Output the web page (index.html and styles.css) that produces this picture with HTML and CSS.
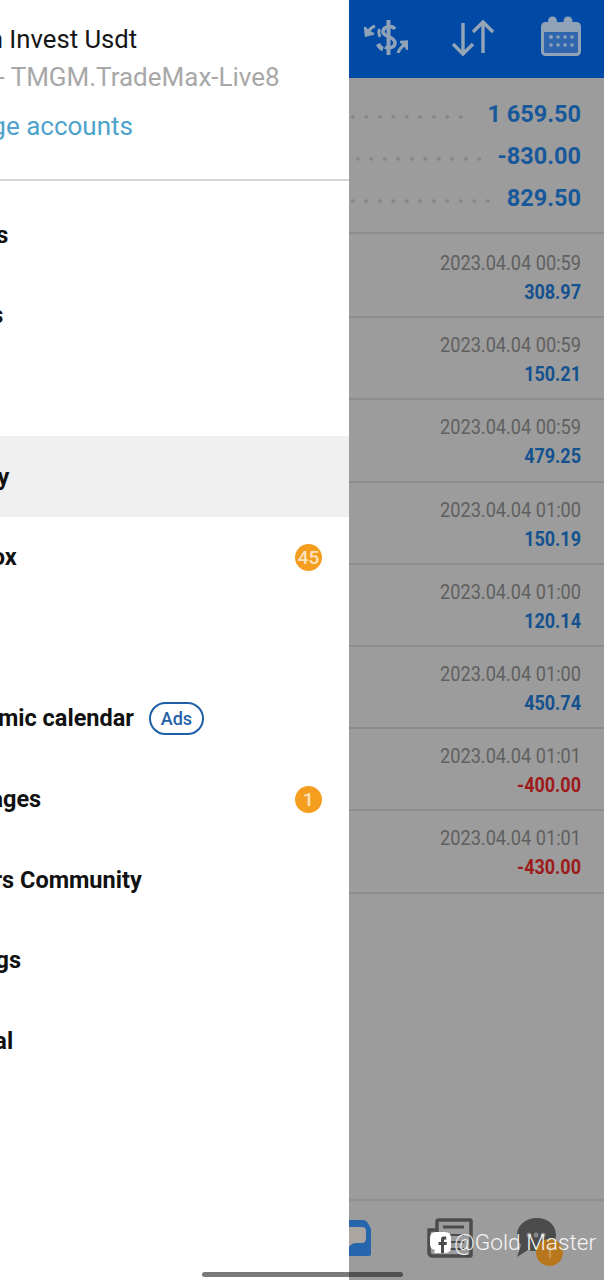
FILE: index.html
```html
<html>
    <head>
        <title>History</title>
        <meta charset="UTF-8">
        <meta name="viewport" content="width=device-width, initial-scale=1.0">
        <link rel="stylesheet" href="styles.css">
    </head>
    <body>
        <div class="app">
            <div class="drawer">
                <div class="cuenta">
                    <div class="nombre">Platinum Invest Usdt</div>
                    <div class="servidor">12345 - TMGM.TradeMax-Live8</div>
                    <div class="manage">Manage accounts</div>
                </div>
                <div class="menu">
                    <div class="item"><span>Quotes</span></div>
                    <div class="item"><span>Charts</span></div>
                    <div class="item"><span>Trade</span></div>
                    <div class="item activo"><span>History</span></div>
                    <div class="item"><span>Mailbox</span><b class="badge">45</b></div>
                    <div class="item"><span>News</span></div>
                    <div class="item"><span>Economic calendar</span><em class="ads">Ads</em></div>
                    <div class="item"><span>Messages</span><b class="badge">1</b></div>
                    <div class="item"><span>Traders Community</span></div>
                    <div class="item"><span>Settings</span></div>
                    <div class="item"><span>Journal</span></div>
                </div>
            </div>

            <div class="main">
                <div class="header">
                    <svg class="ico-dolar" width="44" height="36" viewBox="0 0 44 36" fill="none" stroke="#8fa2b8" stroke-width="3">
                        <path d="M24.500 0V35" stroke-width="4"/>
                        <path d="M31 9C28 5 19 6 19 12C19 17 31 16 31 23C31 28 24 29 21 27" stroke-width="3.500"/>
                        <path d="M15.500 9Q14 13 16 17" stroke-width="3"/>
                        <path d="M14 24Q16 28 19 29" stroke-width="4.500"/>
                        <path d="M11 6Q6 8 3.500 13"/>
                        <path d="M1 7L2 15.500L10 13.500" stroke-width="2.500" fill="#8fa2b8"/>
                        <path d="M34 33Q35 29 41 24"/>
                        <path d="M36 22L44 21.500L43 30" stroke-width="2.500" fill="#8fa2b8"/>
                    </svg>
                    <svg class="ico-flechas" width="44" height="36" viewBox="0 0 44 36" fill="none" stroke="#94a5b8" stroke-width="3.400">
                        <path d="M12 3V34M2 24L12 34L22 24"/>
                        <path d="M32 33V2M22 12L32 2L42 12"/>
                    </svg>
                    <svg class="ico-cal" width="40" height="41" viewBox="0 0 40 41">
                        <rect x="1.500" y="7.500" width="37" height="31" rx="3" fill="#2f66ae" stroke="#8fa2b8" stroke-width="3"/>
                        <rect x="1.500" y="7" width="37" height="9" fill="#8fa2b8"/>
                        <circle cx="11.500" cy="5" r="4.500" fill="#8fa2b8"/>
                        <circle cx="27" cy="5" r="4.500" fill="#8fa2b8"/>
                        <g fill="#8fa2b8">
                            <circle cx="10" cy="21" r="2"/><circle cx="17" cy="21" r="1.800"/><circle cx="24" cy="21" r="1.800"/><circle cx="31" cy="21" r="1.800"/>
                            <circle cx="10" cy="29" r="1.800"/><circle cx="17" cy="29" r="1.800"/><circle cx="24" cy="29" r="1.800"/><circle cx="31" cy="29" r="1.800"/>
                        </g>
                    </svg>
                </div>

                <div class="resumen">
                    <div class="res-fila"><i class="puntos p1"></i><span>1 659.50</span></div>
                    <div class="res-fila"><i class="puntos p2"></i><span>-830.00</span></div>
                    <div class="res-fila"><i class="puntos p3"></i><span>829.50</span></div>
                </div>

                <div class="lista">
                    <div class="fila"><div class="fecha">2023.04.04 00:59</div><div class="monto">308.97</div></div>
                    <div class="fila"><div class="fecha">2023.04.04 00:59</div><div class="monto">150.21</div></div>
                    <div class="fila"><div class="fecha">2023.04.04 00:59</div><div class="monto">479.25</div></div>
                    <div class="fila"><div class="fecha">2023.04.04 01:00</div><div class="monto">150.19</div></div>
                    <div class="fila"><div class="fecha">2023.04.04 01:00</div><div class="monto">120.14</div></div>
                    <div class="fila"><div class="fecha">2023.04.04 01:00</div><div class="monto">450.74</div></div>
                    <div class="fila"><div class="fecha">2023.04.04 01:01</div><div class="monto rojo">-400.00</div></div>
                    <div class="fila"><div class="fecha">2023.04.04 01:01</div><div class="monto rojo">-430.00</div></div>
                </div>

                <div class="tabs">
                    <svg class="tab-carpeta" width="23" height="38" viewBox="0 0 23 38">
                        <path d="M0 8H17V24H7Q3 24 0 28Z" fill="#aaa5a0"/>
                        <path d="M0 1H14Q17 1 19 4L22 10V35Q22 37 20 37H0V28Q3 24 7 24H13Q17 24 17 19V12Q17 8 13 8H0Z" fill="#2566ad"/>
                    </svg>
                    <svg class="tab-news" width="46" height="40" viewBox="0 0 46 40" fill="none" stroke="#4c4c4c" stroke-width="3.500">
                        <path d="M10 12V3Q10 2 12 2H43Q44 2 44 3V37Q44 38 43 38H6Q2 38 2 34V12H10V30"/>
                        <path d="M16 9H37" stroke-width="3"/>
                        <path d="M16 17H37M16 24H37M16 31H37" stroke-width="2"/>
                    </svg>
                    <svg class="tab-chat" width="40" height="40" viewBox="0 0 40 40">
                        <path d="M20 0C31 0 39 7 39 17C39 27 31 33 20 33C17 33 14 33 11 32L0 39L4 27C1 24 0 21 0 17C0 7 9 0 20 0Z" fill="#4b4b4b"/>
                        <circle cx="12" cy="17" r="2.500" fill="#858585"/>
                        <circle cx="19" cy="17" r="2.500" fill="#858585"/>
                        <circle cx="26" cy="17" r="2.500" fill="#858585"/>
                    </svg>
                    <b class="tab-badge">1</b>
                </div>
            </div>

            <div class="marca">
                <svg width="21" height="21" viewBox="0 0 21 21">
                    <path d="M6 0H15Q21 0 21 6V15Q21 21 15 21H4L5 18Q0 17 0 12V6Q0 0 6 0Z" fill="#fff"/>
                    <path d="M16 4.500H13.500Q11 4.500 11 7.500V10H8.500V13H11V21H14V13H16.500L17 10H14V8Q14 7.500 15 7.500H16.500Z" fill="#4b4b4b"/>
                </svg>
                <span>@Gold Master</span>
            </div>
            <div class="barra"></div>
        </div>
    </body>
</html>
```
FILE: styles.css
```css
* {
    box-sizing: border-box;
}

body {
    margin: 0;
    background-color: #9c9c9c;
    font-family: Roboto, "Liberation Sans", sans-serif;
}

.app {
    width: 604px;
    height: 1280px;
    display: flex;
    overflow: hidden;
    position: relative;
}

/* cajon lateral, abierto a medias: el texto se corta por la izquierda */
.drawer {
    width: 349px;
    flex: none;
    background-color: #fff;
    overflow: hidden;
}

.cuenta {
    height: 181px;
    border-bottom: 2px solid #d4d4d4;
    padding-top: 23px;
}

.nombre,
.servidor,
.manage {
    font-size: 26px;
    line-height: 32px;
    white-space: nowrap;
}

.nombre {
    color: #161616;
    margin-left: -99px;
    font-size: 25.700px;
}

.servidor {
    color: #a8a8a8;
    margin-top: 6px;
    margin-left: -82px;
}

.manage {
    color: #4da3cb;
    margin-top: 17px;
    margin-left: -74px;
}

.menu {
    padding-top: 13.600px;
}

.item {
    height: 80.600px;
    display: flex;
    align-items: center;
    margin-left: -67px;
    padding-right: 27px;
    font-size: 23.500px;
    font-weight: 700;
    color: #111;
    white-space: nowrap;
}

.activo {
    background-color: #f0f0f0;
}

.badge {
    margin-left: auto;
    width: 27px;
    height: 27px;
    border-radius: 50%;
    background-color: #f59d1f;
    color: #fde3bd;
    font-size: 19px;
    font-weight: 500;
    text-align: center;
    line-height: 27px;
}

.ads {
    width: 55px;
    height: 33px;
    margin-left: 15px;
    border: 2px solid #1f5fa8;
    border-radius: 17px;
    color: #1f5fa8;
    font-size: 18px;
    font-style: normal;
    font-weight: 500;
    text-align: center;
    line-height: 29px;
}

.main {
    flex: 1;
    min-width: 0;
    display: flex;
    flex-direction: column;
    background-color: #9c9c9c;
}

.header {
    height: 78px;
    background-color: #0049a5;
    position: relative;
    flex: none;
}

.header svg {
    position: absolute;
}

.ico-dolar {
    left: 15px;
    top: 20px;
}

.ico-flechas {
    left: 102px;
    top: 20px;
}

.ico-cal {
    left: 192px;
    top: 16px;
}

.resumen {
    height: 156px;
    flex: none;
    padding: 15px 23px 0 0;
    border-bottom: 2px solid #8c8c8c;
}

.res-fila {
    height: 42px;
    display: flex;
    align-items: center;
    color: #17589b;
    font-size: 23.500px;
    font-weight: 700;
}

.res-fila span {
    margin-left: auto;
    white-space: nowrap;
}

.puntos {
    height: 4px;
    margin-top: 5px;
    background-image: radial-gradient(circle, #868686 1.500px, transparent 1.900px);
    background-size: 13.500px 4px;
    background-repeat: repeat-x;
}

.p1 {
    width: 121px;
    background-position: -3px 0;
}

.p2 {
    width: 135px;
    background-position: 2px 0;
}

.p3 {
    width: 142px;
    background-position: -3px 0;
}

.lista {
    flex: 1;
    padding-top: 2px;
}

.fila {
    height: 82.200px;
    padding: 13px 23px 0 0;
    text-align: right;
    border-bottom: 2px solid #8c8c8c;
}

.fecha {
    color: #606060;
    font-size: 21px;
    line-height: 28px;
    transform: scaleX(0.865);
    transform-origin: right;
    white-space: nowrap;
}

.monto {
    color: #14518f;
    font-size: 20px;
    font-weight: 700;
    line-height: 29px;
    margin-top: 1px;
    transform: scaleX(0.9);
    transform-origin: right;
}

.rojo {
    color: #9c1a1a;
}

.tabs {
    height: 81px;
    flex: none;
    border-top: 2px solid #8f8f8f;
    position: relative;
}

.tabs svg,
.tab-badge {
    position: absolute;
}

.tab-carpeta {
    left: 0;
    top: 18px;
}

.tab-news {
    left: 78px;
    top: 17px;
}

.tab-chat {
    left: 168px;
    top: 17px;
}

.tab-badge {
    left: 187px;
    top: 37.500px;
    width: 27px;
    height: 27px;
    border-radius: 50%;
    background-color: #b8771c;
    color: #c99a5c;
    font-size: 16px;
    font-weight: 500;
    text-align: center;
    line-height: 27px;
}

/* marca de agua encima de la captura */
.marca {
    position: absolute;
    left: 430px;
    top: 1229px;
    display: flex;
    align-items: center;
    gap: 3px;
    color: #f4f4f4;
    font-size: 22.700px;
    font-weight: 300;
    white-space: nowrap;
}

.barra {
    position: absolute;
    left: 202px;
    top: 1272px;
    width: 201px;
    height: 5px;
    border-radius: 3px;
    background: linear-gradient(to right, #7a7a7a 147px, #505050 147px);
}
```
